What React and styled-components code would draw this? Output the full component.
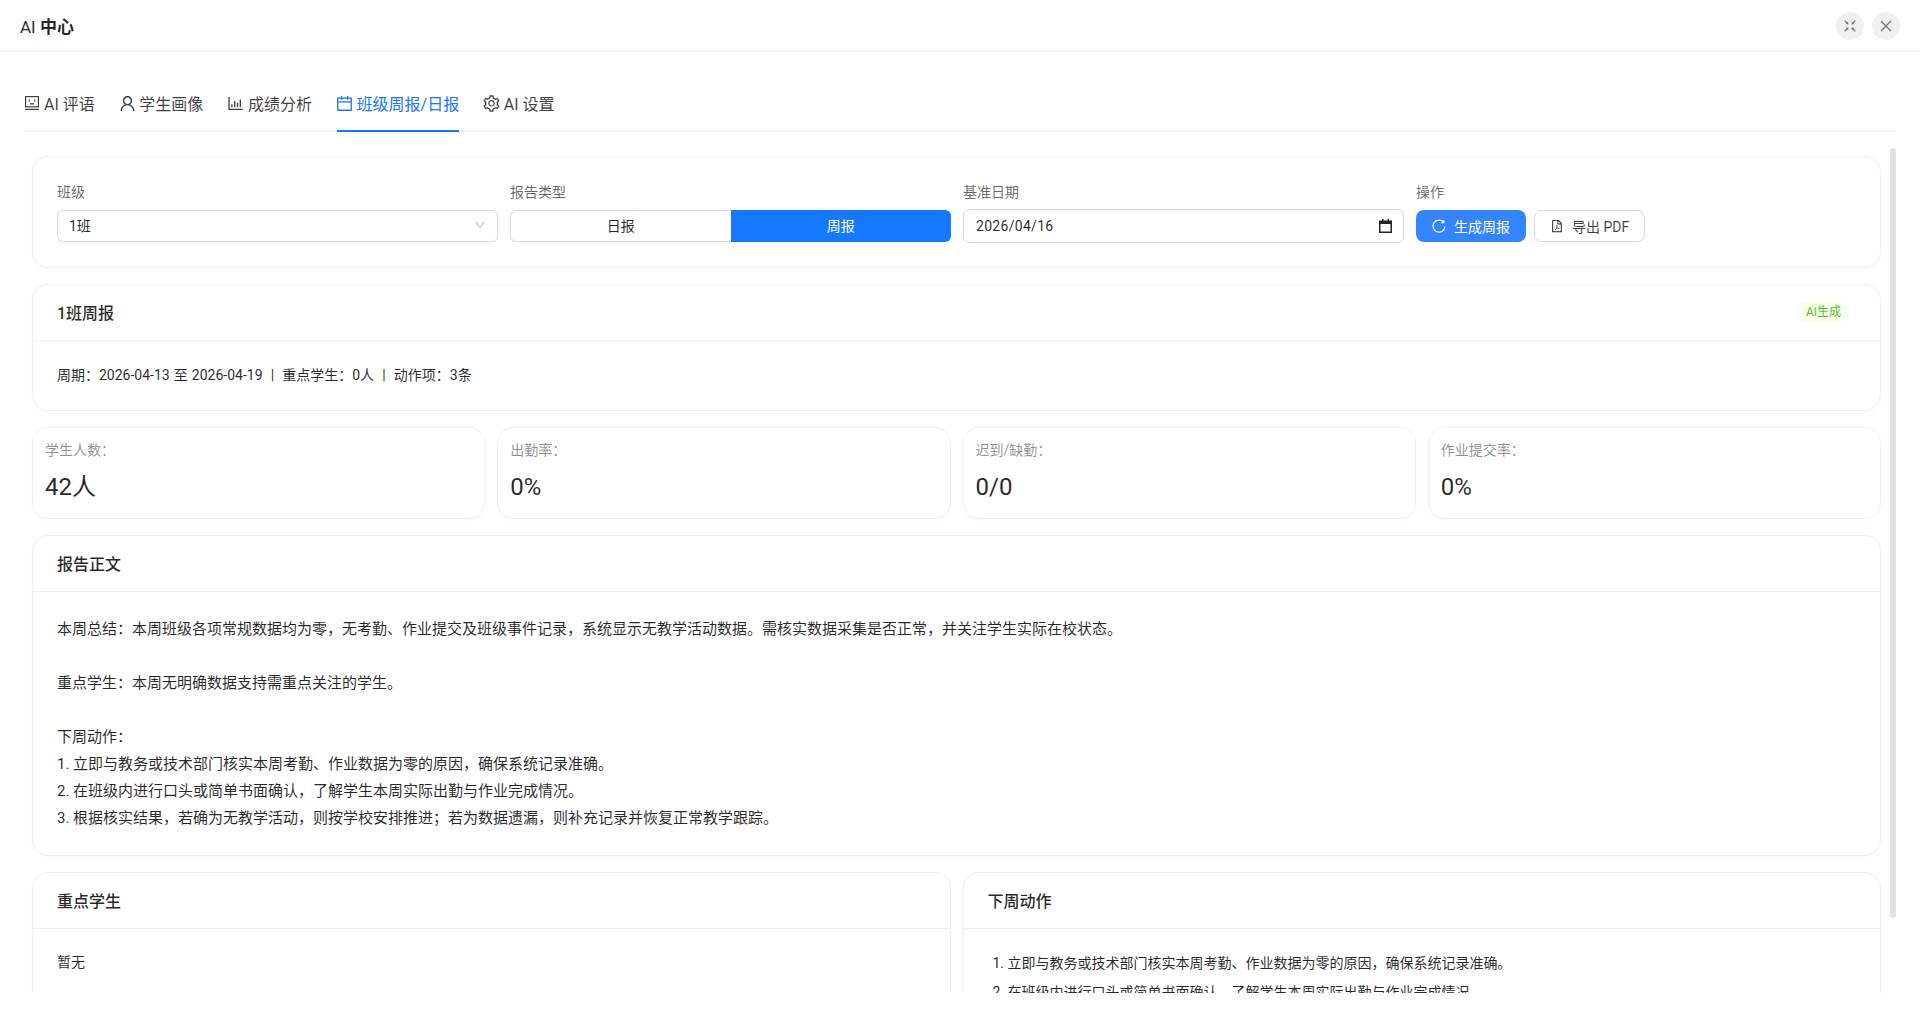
import React from 'react'
import styled, { createGlobalStyle } from 'styled-components'
import {
  AiOutlineUser,
  AiOutlineBarChart,
  AiOutlineCalendar,
  AiOutlineSetting,
  AiOutlineClose,
  AiOutlineDown,
  AiOutlineFilePdf,
  AiOutlineFullscreenExit,
} from 'react-icons/ai'

const FONT = `Roboto, "Noto Sans CJK SC", sans-serif`

const GlobalStyle = createGlobalStyle`
  * { box-sizing: border-box; }
  html, body { margin: 0; height: 100%; background: #fff; }
  body { font-family: ${FONT}; font-size: 14px; color: rgba(0, 0, 0, 0.85); overflow: hidden; }
`

const Modal = styled.div`
  display: flex;
  flex-direction: column;
  width: 1920px;
  height: 993px;
  overflow: hidden;
`

const Header = styled.header`
  display: flex;
  align-items: center;
  justify-content: space-between;
  flex: none;
  height: 52px;
  padding: 0 20px;
  border-bottom: 1px solid #f0f0f0;
`

const Title = styled.div`
  font-size: 17px;
  strong { font-weight: 700; }
`

const HeaderActions = styled.div`
  display: flex;
  gap: 8px;
`

const RoundButton = styled.button`
  display: flex;
  align-items: center;
  justify-content: center;
  width: 28px;
  height: 28px;
  padding: 0;
  border: 0;
  border-radius: 50%;
  background: #f0f0f0;
  color: #777;
  font-size: 16px;
`

const Body = styled.div`
  display: flex;
  flex: 1;
  min-height: 0;
  flex-direction: column;
  padding: 20px 24px 0;
`

const Tabs = styled.nav`
  display: flex;
  flex: none;
  gap: 24.6px;
  height: 60px;
  border-bottom: 1px solid #f0f0f0;
`

const Tab = styled.div`
  display: flex;
  align-items: center;
  gap: 4px;
  height: 60px;
  padding-top: 4px;
  font-size: 16px;
  color: ${p => (p.$active ? '#1677ff' : 'rgba(0, 0, 0, 0.75)')};
  border-bottom: 2px solid ${p => (p.$active ? '#1677ff' : 'transparent')};
  svg { flex: none; }
`

const TabIcon = styled.span`
  display: flex;
  align-items: center;
  justify-content: center;
  width: 16px;
  height: 16px;
  font-size: 19px;
`

const Scroller = styled.div`
  position: relative;
  flex: 1;
  min-height: 0;
  margin-top: 16px;
  overflow: hidden;
`

const ScrollThumb = styled.div`
  position: absolute;
  top: 0;
  right: 0;
  width: 6px;
  height: 770px;
  background: #e2e2e2;
  border-radius: 3px;
`

const Pane = styled.div`
  display: flex;
  flex-direction: column;
  gap: 16px;
  padding: 8px 15px 0 8px;
`

const Card = styled.section`
  background: #fff;
  border: 1px solid #f0f0f0;
  border-radius: 16px;
  box-shadow: 0 2px 8px rgba(0, 0, 0, 0.02);
`

const FilterGrid = styled.div`
  display: grid;
  grid-template-columns: repeat(4, 1fr);
  gap: 12px;
  padding: 24px 23px 25px 24px;
`

const Field = styled.div`
  display: flex;
  flex-direction: column;
  gap: 7px;
`

const FieldLabel = styled.label`
  line-height: 22px;
  color: rgba(0, 0, 0, 0.6);
`

const Select = styled.div`
  display: flex;
  align-items: center;
  justify-content: space-between;
  height: 32px;
  padding: 0 11px 2px;
  border: 1px solid #d9d9d9;
  border-radius: 6px;
  svg { color: #bbb; font-size: 12px; }
`

const Segmented = styled.div`
  display: grid;
  grid-template-columns: 1fr 1fr;
  height: 32px;
`

const Segment = styled.div`
  display: flex;
  align-items: center;
  justify-content: center;
  padding-bottom: 2px;
  color: ${p => (p.$active ? '#fff' : 'inherit')};
  background: ${p => (p.$active ? '#1677ff' : '#fff')};
  border: ${p => (p.$active ? '0' : '1px solid #d9d9d9')};
  border-right: 0;
  border-radius: ${p => (p.$active ? '0 6px 6px 0' : '6px 0 0 6px')};
`

const DateBox = styled(Select)`
  height: 34px;
  margin: -1px 0;
  padding: 0 11px 0 12px;
  border-width: 1.5px;
  letter-spacing: 0.3px;
  svg { color: #222; font-size: 14px; }
`

const Buttons = styled.div`
  display: flex;
  gap: 8px;
`

const Button = styled.button`
  display: flex;
  align-items: center;
  justify-content: center;
  gap: 8px;
  height: 32px;
  padding: 0 ${p => (p.$primary ? '16px' : '15px')};
  font: inherit;
  border-radius: 8px;
  color: ${p => (p.$primary ? '#fff' : 'rgba(0, 0, 0, 0.75)')};
  background: ${p => (p.$primary ? '#3385ff' : '#fff')};
  border: ${p => (p.$primary ? '0' : '1px solid #d9d9d9')};
`

const ButtonIcon = styled.span`
  display: flex;
  align-items: center;
  justify-content: center;
  width: 14px;
  height: 14px;
  font-size: 18px;
  color: ${p => (p.$dark ? '#222' : 'inherit')};
`

const CardHead = styled.div`
  display: flex;
  align-items: center;
  justify-content: space-between;
  height: 56px;
  padding: 0 24px 2px;
  border-bottom: 1px solid #f0f0f0;
`

const CardTitle = styled.h3`
  margin: 0;
  font-size: 16px;
  font-weight: 500;
`

const Badge = styled.span`
  margin-right: 8px;
  padding: 0 7px;
  font-size: 12px;
  line-height: 20px;
  color: #52c41a;
  background: #f6ffed;
  border-radius: 4px;
`

const SummaryLine = styled.div`
  padding: 23px 24px 24px;
  line-height: 22px;
  word-spacing: 0.6px;
  white-space: pre-wrap;
`

const ReportBody = styled.div`
  padding: 24px 24px 23px;
  font-size: 15px;
  line-height: 27px;
  white-space: pre-wrap;
`

const PlainBody = styled.div`
  padding: 22px 24px 24px;
  line-height: 22px;
`

const StatGrid = styled.div`
  display: grid;
  grid-template-columns: repeat(4, 1fr);
  gap: 12px;
`

const Stat = styled(Card)`
  height: 92px;
  padding: 11px 12px;
`

const StatLabel = styled.div`
  line-height: 22px;
  color: rgba(0, 0, 0, 0.45);
`

const StatValue = styled.div`
  margin-top: 10px;
  font-size: 24px;
  line-height: 32px;
`

const TwoCol = styled.div`
  display: grid;
  grid-template-columns: 1fr 1fr;
  gap: 12px;
`

const ActionList = styled.ol`
  margin: 1px 0 0;
  padding-left: 20px;
  li { margin-bottom: 7px; }
`

const BotIcon = () => (
  <svg width="16" height="16" viewBox="0 0 16 16" fill="none" stroke="currentColor" strokeWidth="1.2">
    <rect x="1.6" y="1.6" width="12.8" height="10.2" />
    <path d="M1.2 14.4h13.6M5.2 4.8v1.6M10.8 4.8v1.6M6 8.8h4" />
  </svg>
)

const DateIcon = () => (
  <svg width="13" height="14" viewBox="0 0 13 14">
    <path d="M3 0h1.5v1.5h4V0H10v1.5h3V14H0V1.5h3z M1.5 5v7.5h10V5z" fill="#222" fillRule="evenodd" />
  </svg>
)

const RefreshIcon = () => (
  <svg width="14" height="14" viewBox="0 0 14 14" fill="none" stroke="currentColor" strokeWidth="1.2">
    <path d="M11.6 3.2A6 6 0 1 0 13 7.6" />
    <path d="M11.8 1.2v2.4H9.6" />
  </svg>
)

const stats = [
  ['学生人数：', '42人'],
  ['出勤率：', '0%'],
  ['迟到/缺勤：', '0/0'],
  ['作业提交率：', '0%'],
]

const reportText = `本周总结：本周班级各项常规数据均为零，无考勤、作业提交及班级事件记录，系统显示无教学活动数据。需核实数据采集是否正常，并关注学生实际在校状态。

重点学生：本周无明确数据支持需重点关注的学生。

下周动作：
1. 立即与教务或技术部门核实本周考勤、作业数据为零的原因，确保系统记录准确。
2. 在班级内进行口头或简单书面确认，了解学生本周实际出勤与作业完成情况。
3. 根据核实结果，若确为无教学活动，则按学校安排推进；若为数据遗漏，则补充记录并恢复正常教学跟踪。`

const actions = [
  '立即与教务或技术部门核实本周考勤、作业数据为零的原因，确保系统记录准确。',
  '在班级内进行口头或简单书面确认，了解学生本周实际出勤与作业完成情况。',
  '根据核实结果，若确为无教学活动，则按学校安排推进；若为数据遗漏，则补充记录并恢复正常教学跟踪。',
]

export default function App() {
  return (
    <>
      <GlobalStyle />
      <Modal>
        <Header>
          <Title>AI <strong>中心</strong></Title>
          <HeaderActions>
            <RoundButton><AiOutlineFullscreenExit /></RoundButton>
            <RoundButton><AiOutlineClose /></RoundButton>
          </HeaderActions>
        </Header>
        <Body>
          <Tabs>
            <Tab><TabIcon><BotIcon /></TabIcon>AI 评语</Tab>
            <Tab><TabIcon><AiOutlineUser /></TabIcon>学生画像</Tab>
            <Tab><TabIcon><AiOutlineBarChart /></TabIcon>成绩分析</Tab>
            <Tab $active><TabIcon><AiOutlineCalendar /></TabIcon>班级周报/日报</Tab>
            <Tab><TabIcon><AiOutlineSetting /></TabIcon>AI 设置</Tab>
          </Tabs>
          <Scroller>
            <ScrollThumb />
            <Pane>
              <Card>
                <FilterGrid>
                  <Field>
                    <FieldLabel>班级</FieldLabel>
                    <Select>1班<AiOutlineDown /></Select>
                  </Field>
                  <Field>
                    <FieldLabel>报告类型</FieldLabel>
                    <Segmented>
                      <Segment>日报</Segment>
                      <Segment $active>周报</Segment>
                    </Segmented>
                  </Field>
                  <Field>
                    <FieldLabel>基准日期</FieldLabel>
                    <DateBox>2026/04/16<DateIcon /></DateBox>
                  </Field>
                  <Field>
                    <FieldLabel>操作</FieldLabel>
                    <Buttons>
                      <Button $primary><ButtonIcon><RefreshIcon /></ButtonIcon>生成周报</Button>
                      <Button><ButtonIcon $dark><AiOutlineFilePdf /></ButtonIcon>导出 PDF</Button>
                    </Buttons>
                  </Field>
                </FilterGrid>
              </Card>
              <Card>
                <CardHead>
                  <CardTitle>1班周报</CardTitle>
                  <Badge>AI生成</Badge>
                </CardHead>
                <SummaryLine>周期：2026-04-13 至 2026-04-19  |  重点学生：0人  |  动作项：3条</SummaryLine>
              </Card>
              <StatGrid>
                {stats.map(([label, value]) => (
                  <Stat key={label}>
                    <StatLabel>{label}</StatLabel>
                    <StatValue>{value}</StatValue>
                  </Stat>
                ))}
              </StatGrid>
              <Card>
                <CardHead><CardTitle>报告正文</CardTitle></CardHead>
                <ReportBody>{reportText}</ReportBody>
              </Card>
              <TwoCol>
                <Card>
                  <CardHead><CardTitle>重点学生</CardTitle></CardHead>
                  <PlainBody>暂无</PlainBody>
                </Card>
                <Card>
                  <CardHead><CardTitle>下周动作</CardTitle></CardHead>
                  <PlainBody>
                    <ActionList>
                      {actions.map(a => <li key={a}>{a}</li>)}
                    </ActionList>
                  </PlainBody>
                </Card>
              </TwoCol>
            </Pane>
          </Scroller>
        </Body>
      </Modal>
    </>
  )
}
